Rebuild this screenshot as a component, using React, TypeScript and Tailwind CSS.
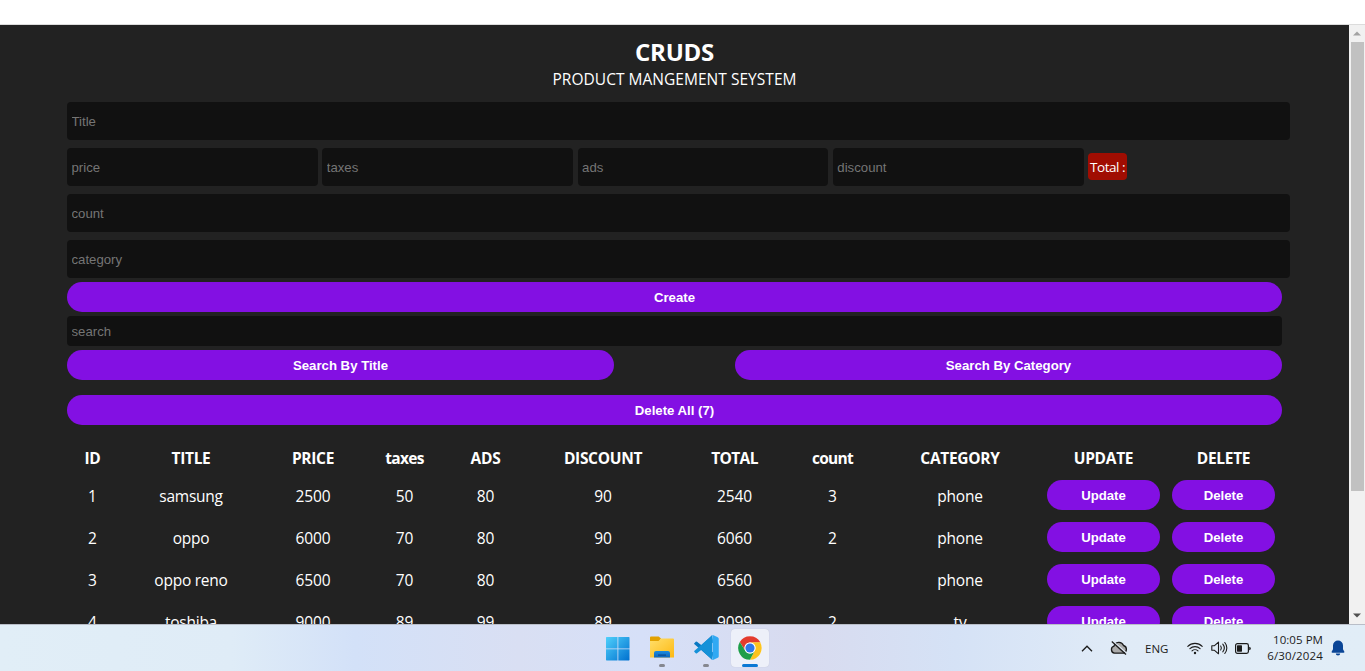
import React from "react";

const COLS = [
  ["ID", "w-[47px]"],
  ["TITLE", "w-[146px]"],
  ["PRICE", "w-[94px]"],
  ["taxes", "w-[85px] tracking-[-0.7px]"],
  ["ADS", "w-[73px]"],
  ["DISCOUNT", "w-[158px]"],
  ["TOTAL", "w-[101px] tracking-[-0.6px]"],
  ["count", "w-[91px] tracking-[-0.7px]"],
  ["CATEGORY", "w-[160px]"],
  ["UPDATE", "w-[123px]"],
  ["DELETE", "w-[113px]"],
];

const ROWS = [
  ["1", "samsung", "2500", "50", "80", "90", "2540", "3", "phone"],
  ["2", "oppo", "6000", "70", "80", "90", "6060", "2", "phone"],
  ["3", "oppo reno", "6500", "70", "80", "90", "6560", "", "phone"],
  ["4", "toshiba", "9000", "89", "99", "89", "9099", "2", "tv"],
];

function Field({ label, className }: { label: string; className: string }) {
  return (
    <input
      placeholder={label}
      className={`block rounded bg-[#111] px-[4.5px] font-['Liberation_Sans',Arial,sans-serif] text-[13.2px] text-white placeholder-[#757575] outline-none ${className}`}
    />
  );
}

function Button({ children, className }: { children: React.ReactNode; className: string }) {
  return (
    <button
      className={`block h-[30px] rounded-[20px] bg-[#8310e3] pt-px text-center font-['Liberation_Sans',Arial,sans-serif] text-[13.2px] font-bold leading-[29px] text-white ${className}`}
    >
      {children}
    </button>
  );
}

function WindowsIcon() {
  return (
    <svg width="24" height="24" viewBox="0 0 24 24">
      <defs>
        <linearGradient id="win" x1="0" y1="0" x2="1" y2="1">
          <stop offset="0" stopColor="#4fd0fb" />
          <stop offset="1" stopColor="#0070cf" />
        </linearGradient>
      </defs>
      <path
        fill="url(#win)"
        d="M.5 0H11.500v11.500H0V.5zM12.300 0H23l.5.5v11H12.300zM0 12.300h11.500V23.500H.5L0 23zM12.300 12.300h11.200V23l-.5.5H12.300z"
      />
    </svg>
  );
}

function FolderIcon() {
  return (
    <svg width="24" height="23" viewBox="0 0 24 23">
      <defs>
        <linearGradient id="fold" x1="0" y1="0" x2="1" y2="1">
          <stop offset="0" stopColor="#ffdf6b" />
          <stop offset="1" stopColor="#fdb913" />
        </linearGradient>
        <linearGradient id="tray" x1="0" y1="0" x2="0" y2="1">
          <stop offset="0" stopColor="#1b8be0" />
          <stop offset="1" stopColor="#0f66ba" />
        </linearGradient>
      </defs>
      <path fill="#e2a100" d="M0 1.500Q0 .5 1 .5h7.700L11 2.500 9 6H0z" />
      <path fill="url(#fold)" d="M0 5h8.500L11 2.500h12q1 0 1 1V21.500H0z" />
      <path fill="url(#tray)" d="M4 21.500V17q0-2 2-2h12q2 0 2 2v4.500z" />
      <path fill="#0b4a90" d="M8 18.500h8v1.200H8z" />
    </svg>
  );
}

function CodeIcon() {
  return (
    <svg width="25" height="25" viewBox="0 0 100 100">
      <path fill="#0878c2" d="M72 1 30 41 12 27q-3-2-5 0l-5 5q-3 3 0 5l70 61 6-28-6-3z" />
      <path fill="#1591d8" d="M72 99 30 59 12 73q-3 2-5 0l-5-5q-3-3 0-5L72 2l6 28-6 3z" />
      <path fill="#31a9f3" d="M72 1q3-1 6 0l17 8q4 2 4 6v70q0 4-4 6l-17 8q-3 1-6 0 2-1 2-5V7q0-4-2-6z" />
    </svg>
  );
}

function ChromeIcon() {
  return (
    <svg width="24" height="24" viewBox="0 0 48 48">
      <circle cx="24" cy="24" r="23.5" fill="#fff" />
      <path fill="#e33b2e" d="M3.6 12.2A23.5 23.5 0 0 1 44.4 12.2L44.4 13H24A11 11 0 0 0 14.5 29.5z" />
      <path fill="#fcc31e" d="M44.4 12.5A23.5 23.5 0 0 1 24 47.5L33.5 29.5A11 11 0 0 0 24 13z" />
      <path fill="#1e9e4a" d="M3.6 12.2A23.5 23.5 0 0 0 24 47.5L33.5 29.5A11 11 0 0 1 14.5 29.5z" />
      <circle cx="24" cy="24" r="11" fill="#fff" />
      <circle cx="24" cy="24" r="9.2" fill="#2f78ea" />
    </svg>
  );
}

function CloudOffIcon() {
  return (
    <svg width="18" height="14" viewBox="0 0 18 14" fill="none" stroke="#1b1b1b" strokeWidth="1.3">
      <path fill="#aaa" d="M4.500 12.200a3.600 3.600 0 0 1-.5-7A5 5 0 0 1 13.500 4.500a4 4 0 0 1 0 7.700z" />
      <path stroke="#e2ecf7" strokeWidth="1.200" d="M3 .2 17 12.500" />
      <path d="M1.800 .6 16 13.400" />
    </svg>
  );
}

function WifiIcon() {
  return (
    <svg width="16" height="13" viewBox="0 0 16 13" fill="none" stroke="#1b1b1b" strokeWidth="1.1" strokeLinecap="round">
      <path d="M.8 4.400a10 10 0 0 1 14.400 0M2.900 6.700a7.200 7.200 0 0 1 10.200 0M5 8.900a4.300 4.300 0 0 1 6 0" />
      <circle cx="8" cy="11" r="1.200" fill="#1b1b1b" stroke="none" />
    </svg>
  );
}

function VolumeIcon() {
  return (
    <svg width="17" height="14" viewBox="0 0 17 14" fill="none" stroke="#1b1b1b" strokeWidth="1.1" strokeLinecap="round" strokeLinejoin="round">
      <path d="M.8 4.700h2.700L7.500 1.200v11.600L3.500 9.300H.8z" />
      <path d="M9.700 5a3.500 3.500 0 0 1 0 4M11.800 3.200a6 6 0 0 1 0 7.600M13.800 1.500a8.500 8.500 0 0 1 0 11" />
    </svg>
  );
}

function BatteryIcon() {
  return (
    <svg width="16" height="11" viewBox="0 0 16 11">
      <rect x=".6" y=".6" width="12.800" height="9.800" rx="1.800" fill="none" stroke="#1b1b1b" strokeWidth="1.200" />
      <rect x="2" y="2.300" width="5" height="6.400" rx=".6" fill="#1b1b1b" />
      <path d="M14.200 3.700q1.600.3 1.600 1.800t-1.600 1.800z" fill="#1b1b1b" />
    </svg>
  );
}

function BellIcon() {
  return (
    <svg width="14" height="16" viewBox="0 0 14 16" fill="#0a4596">
      <path d="M7 .5a5 5 0 0 1 5 5v3.800l1.400 2.500q.2 1-.8 1H1.400q-1 0-.8-1L2 9.300V5.500a5 5 0 0 1 5-5zM4.800 13.600h4.400a2.200 2 0 0 1-4.400 0z" />
    </svg>
  );
}

export default function App() {
  return (
    <div className="flex h-[671px] w-[1365px] flex-col overflow-hidden bg-white font-['Open_Sans','Noto_Sans',sans-serif] text-white">
      <div className="h-[25px] shrink-0 border-b border-[#dcdcdc] bg-white" />

      <div className="flex h-[599px] shrink-0 overflow-hidden">
        <main className="h-full w-[1349px] overflow-hidden bg-[#222] pl-[67px] pt-[13px]">
          <header className="w-[1215px] text-center">
            <h1 className="h-[29px] text-[24px] font-bold leading-[28px] tracking-[-0.3px]">CRUDS</h1>
            <p className="h-[21px] text-[15.5px] leading-[24px] tracking-[0.03px]">PRODUCT MANGEMENT SEYSTEM</p>
          </header>

          <section className="mt-[14px] flex flex-col gap-2">
            <Field label="Title" className="h-[38px] w-[1223px]" />
            <div className="flex items-center gap-[4.4px]">
              <Field label="price" className="h-[38px] w-[250.9px]" />
              <Field label="taxes" className="h-[38px] w-[250.9px]" />
              <Field label="ads" className="h-[38px] w-[250.9px]" />
              <Field label="discount" className="h-[38px] w-[250.9px]" />
              <span className="mb-px h-[27px] w-[39px] whitespace-nowrap rounded bg-[#a00d02] text-center text-[13.5px] leading-[28px] tracking-[-0.45px]">
                Total :
              </span>
            </div>
            <Field label="count" className="h-[38px] w-[1223px]" />
            <Field label="category" className="h-[38px] w-[1223px]" />
          </section>

          <section className="mt-1 flex w-[1215px] flex-col">
            <Button className="w-full">Create</Button>
            <Field label="search" className="mt-1 h-[30px] w-full" />
            <div className="mt-1 flex justify-between">
              <Button className="w-[547px]">Search By Title</Button>
              <Button className="w-[547px]">Search By Category</Button>
            </div>
            <Button className="mt-[15px] w-full">Delete All (7)</Button>
          </section>

          <table className="mt-[17px] w-[1215px] table-fixed border-separate border-spacing-[2px] text-center text-[16px]">
            <thead>
              <tr className="h-[29px] tracking-[-0.3px]">
                {COLS.map(([name, width]) => (
                  <th key={name} className={`p-0 pb-px text-[15.5px] font-bold leading-[27px] ${width}`}>
                    {name}
                  </th>
                ))}
              </tr>
            </thead>
            <tbody>
              {ROWS.map((row) => (
                <tr key={row[0]} className="h-[40px]">
                  {row.map((value, i) => (
                    <td
                      key={i}
                      className={`p-0 pt-[2px] leading-[22px] ${i === 1 || i === 8 ? "text-[15.5px] tracking-[-0.25px]" : "text-[15.5px] tracking-[-0.1px]"}`}
                    >
                      {value}
                    </td>
                  ))}
                  <td className="p-[5px]">
                    <Button className="w-full">Update</Button>
                  </td>
                  <td className="p-[5px]">
                    <Button className="w-full">Delete</Button>
                  </td>
                </tr>
              ))}
            </tbody>
          </table>
        </main>

        <aside className="flex w-4 flex-col items-center bg-[#f1f1f1]">
          <div className="flex h-[17px] items-center">
            <svg width="8" height="5" viewBox="0 0 8 5">
              <path d="M0 4.500h8L4 .5z" fill="#a3a3a3" />
            </svg>
          </div>
          <div className="h-[449px] w-[13px] bg-[#c1c1c1]" />
          <div className="mt-auto flex h-[18px] items-center">
            <svg width="8" height="5" viewBox="0 0 8 5">
              <path d="M0 .5h8L4 4.500z" fill="#505050" />
            </svg>
          </div>
        </aside>
      </div>

      <footer className="flex h-[47px] shrink-0 border-t border-[#b9bec8] bg-[linear-gradient(90deg,#e1eef7_0%,#dfecf7_17%,#d3e1f8_26%,#d9dff3_38%,#d6e0f8_47%,#d8dbef_59%,#d5e2f6_70%,#e0ebf7_82%,#e1edf7_100%)] text-[#1b1b1b]">
        <nav className="ml-[599px] flex pt-[4px]">
          <div className="flex h-[38px] w-[38px] flex-col items-center pt-[8px]">
            <WindowsIcon />
          </div>
          <div className="ml-[6px] flex h-[38px] w-[38px] flex-col items-center pt-[7px]">
            <FolderIcon />
            <span className="mt-[5px] h-[3px] w-[6px] shrink-0 rounded-full bg-[#85878f]" />
          </div>
          <div className="ml-[6px] flex h-[38px] w-[38px] flex-col items-center pt-[6px]">
            <CodeIcon />
            <span className="mt-[4px] h-[3px] w-[6px] shrink-0 rounded-full bg-[#85878f]" />
          </div>
          <div className="ml-[6px] flex h-[38px] w-[38px] flex-col items-center rounded bg-[#edf0f9] pt-[7px] shadow-[0_0_1px_#b5bacb]">
            <ChromeIcon />
            <span className="mt-[4px] h-[3px] w-4 shrink-0 rounded-full bg-[#0a78d4]" />
          </div>
        </nav>

        <div className="ml-auto flex items-center pr-[20px]">
          <svg width="12" height="7" viewBox="0 0 12 7" fill="none" stroke="#1b1b1b" strokeWidth="1.3">
            <path d="M1 6.200 6 1.200l5 5" />
          </svg>
          <span className="ml-[17px]">
            <CloudOffIcon />
          </span>
          <span className="ml-[17px] w-[24px] whitespace-nowrap pt-px text-[11.5px] leading-4">ENG</span>
          <span className="ml-[18px]">
            <WifiIcon />
          </span>
          <span className="ml-[8px]">
            <VolumeIcon />
          </span>
          <span className="ml-[7px]">
            <BatteryIcon />
          </span>
          <div className="ml-[8px] w-[64px] whitespace-nowrap text-right text-[11.5px] leading-4">
            <div className="tracking-[0.05px]">10:05 PM</div>
            <div className="tracking-[0.15px]">6/30/2024</div>
          </div>
          <span className="ml-[8px]">
            <BellIcon />
          </span>
        </div>
      </footer>
    </div>
  );
}
